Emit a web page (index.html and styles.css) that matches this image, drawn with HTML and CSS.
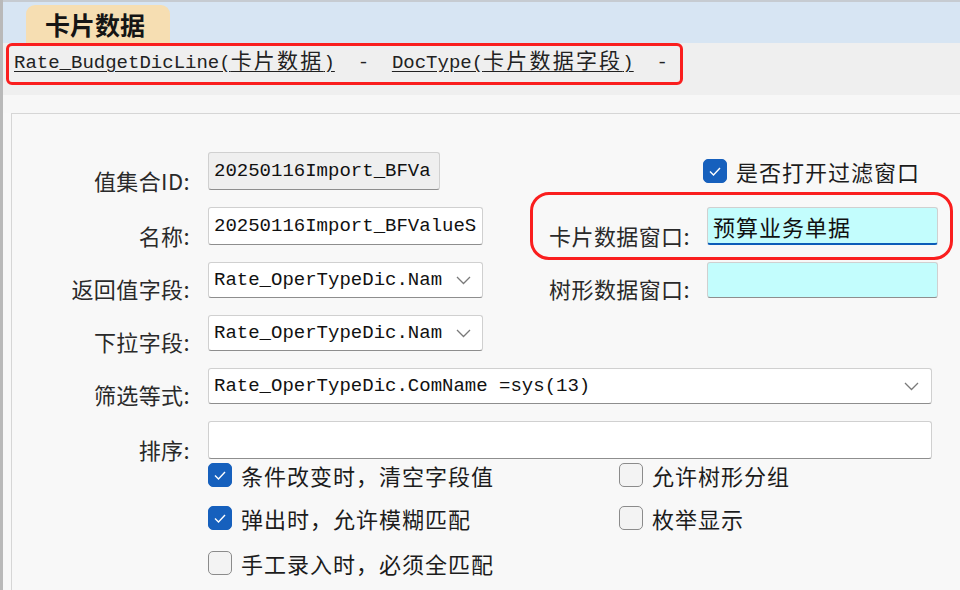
FILE: index.html
```html
<!DOCTYPE html>
<html lang="zh-CN">
  <head>
    <meta charset="UTF-8" />
    <title>卡片数据</title>
    <link rel="stylesheet" href="styles.css">
  </head>
  <body>
    <div class="window">
      <div class="tabs">
        <div class="tab">卡片数据</div>
      </div>

      <div class="crumbs">
        <div class="crumbs-box">
          <a class="crumb">Rate_BudgetDicLine(<span class="cn">卡片数据</span>)</a><span class="sep">&nbsp;&nbsp;-&nbsp;&nbsp;</span><a class="crumb">DocType(<span class="cn">卡片数据字段</span>)</a><span class="sep">&nbsp;&nbsp;-</span>
        </div>
      </div>
      <div class="strip"></div>

      <div class="panel">
        <div class="form">
          <label class="lbl">值集合ID:</label>
          <div class="field readonly short">20250116Import_BFVa</div>
          <div class="check top-check">
            <span class="box on"><svg width="12" height="9" viewBox="0 0 12 9"><polyline points="1,4.5 4.5,8 11,1" fill="none" stroke="#fff" stroke-width="1.4"/></svg></span>是否打开过滤窗口
          </div>

          <label class="lbl">名称:</label>
          <div class="field">20250116Import_BFValueS</div>
          <div class="pair">
            <label class="lbl">卡片数据窗口:</label>
            <div class="field cyan focus">预算业务单据</div>
          </div>

          <label class="lbl">返回值字段:</label>
          <div class="field select">
            <span class="val">Rate_OperTypeDic.Nam</span>
            <svg class="chev" width="15" height="9" viewBox="0 0 15 9"><polyline points="1,1 7.5,7.5 14,1" fill="none" stroke="#7a7a7a" stroke-width="1.3"/></svg>
          </div>
          <label class="lbl rlbl">树形数据窗口:</label>
          <div class="field cyan rctl"></div>

          <label class="lbl">下拉字段:</label>
          <div class="field select">
            <span class="val">Rate_OperTypeDic.Nam</span>
            <svg class="chev" width="15" height="9" viewBox="0 0 15 9"><polyline points="1,1 7.5,7.5 14,1" fill="none" stroke="#7a7a7a" stroke-width="1.3"/></svg>
          </div>

          <label class="lbl">筛选等式:</label>
          <div class="field select wide">
            <span class="val">Rate_OperTypeDic.ComName =sys(13)</span>
            <svg class="chev" width="15" height="9" viewBox="0 0 15 9"><polyline points="1,1 7.5,7.5 14,1" fill="none" stroke="#7a7a7a" stroke-width="1.3"/></svg>
          </div>

          <label class="lbl">排序:</label>
          <div class="field wide"></div>
        </div>

        <div class="opts">
          <div class="check"><span class="box on"><svg width="12" height="9" viewBox="0 0 12 9"><polyline points="1,4.5 4.5,8 11,1" fill="none" stroke="#fff" stroke-width="1.4"/></svg></span>条件改变时，清空字段值</div>
          <div class="check"><span class="box"></span>允许树形分组</div>
          <div class="check"><span class="box on"><svg width="12" height="9" viewBox="0 0 12 9"><polyline points="1,4.5 4.5,8 11,1" fill="none" stroke="#fff" stroke-width="1.4"/></svg></span>弹出时，允许模糊匹配</div>
          <div class="check"><span class="box"></span>枚举显示</div>
          <div class="check last"><span class="box"></span>手工录入时，必须全匹配</div>
        </div>
      </div>
    </div>
  </body>
</html>
```

FILE: styles.css
```css
* {
  box-sizing: border-box;
}

body {
  margin: 0;
  background: #f8f8f8;
  font-family: "Noto Sans CJK SC", "Noto Sans", sans-serif;
  color: #222;
}

.window {
  height: 590px;
  overflow: hidden;
  border-left: 3px solid #b9b9b9;
  background: #f8f8f8;
}

/* tab bar */
.tabs {
  height: 43px;
  padding: 3px 0 0 23px;
  background: #d7e5f3;
  border-top: 2px solid #c6cbd1;
}

.tab {
  display: inline-block;
  height: 38px;
  padding: 0 25px 0 19px;
  background: #f6deb2;
  border-radius: 9px 9px 0 0;
  font-size: 25px;
  font-weight: 700;
  line-height: 38px;
  color: #151515;
}

/* breadcrumb links */
.crumbs {
  height: 52px;
  padding-left: 3px;
  background: #efefef;
}

.crumbs-box {
  width: 677px;
  height: 42px;
  padding: 1px 0 0 5px;
  border: 3px solid #fa1e1e;
  border-radius: 6px;
  font-family: "Liberation Mono", "Noto Sans CJK SC", monospace;
  font-size: 19px;
  line-height: 24px;
  white-space: nowrap;
  color: #222;
}

.crumb {
  color: #222;
  text-decoration: underline;
  text-underline-offset: 3px;
}

.crumb .cn {
  font-family: "Noto Sans CJK SC", sans-serif;
  font-size: 21px;
  letter-spacing: 2.2px;
}

.strip {
  height: 18px;
  background: #f7f7f7;
}

/* form panel */
.panel {
  height: 480px;
  margin-left: 8px;
  padding-top: 38px;
  border-top: 1px solid #d6d6d6;
  border-left: 1px solid #d6d6d6;
  background: #f8f8f8;
}

.form {
  display: grid;
  grid-template-columns: 196px 275px 62px 162px 231px;
  grid-template-rows: 38px 38px 36px 36px 36px 38px;
  row-gap: 17px;
}

.lbl {
  grid-column: 1;
  align-self: end;
  margin-bottom: -3px;
  padding-right: 18px;
  text-align: right;
  font-size: 22px;
  line-height: 26px;
  letter-spacing: 0.4px;
  color: #2a2a2a;
  white-space: nowrap;
}

.rlbl {
  grid-column: 4;
  padding-right: 17px;
}

.field {
  grid-column: 2;
  display: flex;
  align-items: center;
  padding: 0 4px 0 5px;
  background: #fff;
  border: 1px solid #d0d0d0;
  border-bottom-color: #8e8e8e;
  border-radius: 3px;
  font-family: "Liberation Mono", monospace;
  font-size: 19px;
  color: #111;
  white-space: nowrap;
  overflow: hidden;
}

.field.short {
  width: 232px;
}

.field.readonly {
  background: #efefef;
}

.field.wide {
  grid-column: 2 / 6;
  margin-right: 6px;
}

.field.cyan {
  background: #c3fdfd;
  font-family: "Noto Sans CJK SC", sans-serif;
  font-size: 22px;
  letter-spacing: 1px;
}

.field.focus {
  border-bottom: 2px solid #0b5cb8;
}

.rctl {
  grid-column: 5;
}

.select .val {
  flex: 1;
}

.chev {
  flex-shrink: 0;
  margin: 0 8px 0 14px;
}

/* highlighted label + field */
.pair {
  grid-column: 4 / 6;
  display: flex;
  outline: 3px solid #fa1e1e;
  outline-offset: 12px;
  border-radius: 4px;
}

.pair .lbl {
  width: 162px;
  padding-right: 17px;
}

.pair .field {
  width: 231px;
}

/* checkboxes */
.check {
  display: flex;
  align-items: center;
  gap: 9px;
  font-size: 22px;
  line-height: 24px;
  letter-spacing: 1px;
  color: #1c1c1c;
  white-space: nowrap;
}

.top-check {
  grid-column: 5;
  align-self: center;
  margin-left: -4px;
}

.box {
  flex-shrink: 0;
  width: 24px;
  height: 24px;
  border: 1.5px solid #8b8b8b;
  border-radius: 5px;
  background: #f3f3f3;
}

.box.on {
  display: flex;
  align-items: center;
  justify-content: center;
  background: #1660bd;
  border-color: #1660bd;
}

.opts {
  display: grid;
  grid-template-columns: 411px auto;
  grid-auto-rows: 24px;
  row-gap: 19px;
  margin: 4px 0 0 196px;
}

.opts .last {
  margin-top: 4px;
}
```
